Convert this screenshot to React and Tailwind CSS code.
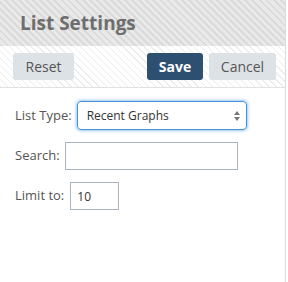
import React from 'react';

const App = () => {
  return (
    <div className="w-[288px] h-[282px] bg-white font-['Open_Sans',sans-serif] text-[#555]">
      <div className="w-[286px] h-full border-r border-[#dcdcdc]">
        {/* Header */}
        <div className="h-[46px] pl-[20px] flex items-center bg-[repeating-linear-gradient(45deg,#dadada_0,#dadada_2px,#e9e9e9_2px,#e9e9e9_5px)]">
          <h1 className="text-[19px] font-bold text-[#6e6e6e] leading-none">List Settings</h1>
        </div>

        {/* Toolbar */}
        <div className="h-[42px] px-[13px] flex items-center border-b border-[#e2e2e2] bg-[repeating-linear-gradient(45deg,#ececec_0,#ececec_1px,#fff_1px,#fff_5px)]">
          <button className="h-[27px] w-[61px] rounded-[3px] bg-[#dde2e6] text-[14px] text-[#555]">Reset</button>
          <div className="flex-1" />
          <button className="h-[27px] w-[56px] rounded-[3px] bg-[#2e5070] text-[14px] font-bold text-white">Save</button>
          <button className="h-[27px] w-[67px] ml-[6px] -mr-[4px] rounded-[3px] bg-[#dde2e6] text-[14px] text-[#555]">Cancel</button>
        </div>

        {/* Form */}
        <div className="pl-[15px] pt-[13px] text-[13px] flex flex-col gap-[12px]">
          <div className="flex items-center">
            <label className="mr-[5px]">List Type:</label>
            <div className="relative w-[170px] h-[29px] rounded-[4px] border border-[#4a90d9] shadow-[0_0_3px_1px_rgba(90,160,230,0.6)] flex items-center pl-[9px] text-[12px] text-[#333]">
              Recent Graphs
              <svg className="absolute right-[6px] top-[9px]" width="6" height="10" viewBox="0 0 6 10">
                <path d="M0 4 L3 0 L6 4 Z M0 6 L3 10 L6 6 Z" fill="#777" />
              </svg>
            </div>
          </div>
          <div className="flex items-center">
            <label className="mr-[5px]">Search:</label>
            <input className="w-[173px] h-[28px] border border-[#a9b4be] outline-none" />
          </div>
          <div className="flex items-center">
            <label className="mr-[6px]">Limit to:</label>
            <input
              defaultValue="10"
              className="w-[49px] h-[28px] border border-[#a9b4be] outline-none px-[6px] text-[12px] text-[#333]"
            />
          </div>
        </div>
      </div>
    </div>
  );
};

export default App;
